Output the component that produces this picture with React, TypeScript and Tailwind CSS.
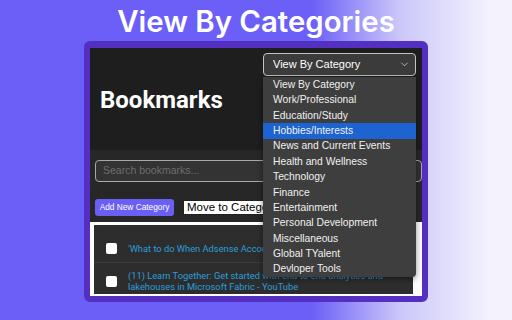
import { ChevronDown } from "lucide-react";

const categories = [
  "View By Category",
  "Work/Professional",
  "Education/Study",
  "Hobbies/Interests",
  "News and Current Events",
  "Health and Wellness",
  "Technology",
  "Finance",
  "Entertainment",
  "Personal Development",
  "Miscellaneous",
  "Global TYalent",
  "Devloper Tools",
];

function Checkbox() {
  return <span className="block h-[11px] w-[11px] shrink-0 rounded-[2px] bg-white" />;
}

export default function App() {
  return (
    <div className="flex h-[320px] w-[512px] flex-col items-center overflow-hidden bg-[linear-gradient(to_right,#6b5ff7_61%,#cbc7fa_78%,#f4f3fd_96%)]">
      <h1 className="flex h-[41px] items-center justify-center pt-[3px] font-['Inter',sans-serif] text-[29.4px] font-semibold leading-none text-white">
        View By Categories
      </h1>

      <div className="flex h-[261px] w-[344px] flex-col overflow-visible rounded-[6px] border-x-[6px] border-t-[7px] border-b-[6px] border-[#5330c1] bg-[#5330c1]">
        {/* header */}
        <div className="relative flex h-[102px] shrink-0 items-center bg-[#1e1e1e] pl-[10px] pt-[1px]">
          <span className="font-['Roboto',sans-serif] text-[24px] font-bold text-white">Bookmarks</span>

          <div className="absolute right-[6px] top-[5px] z-10 w-[153px] font-['Liberation_Sans',Arial,sans-serif]">
            <div className="flex h-[23px] items-center justify-between rounded-[4px] border border-[#c4c4c4] bg-[#3b3b3b] pl-[9px] pr-[5px] text-[11px] text-white">
              <span>View By Category</span>
              <ChevronDown size={11} strokeWidth={1.6} className="text-[#dcdcdc]" />
            </div>
            <ul className="mt-[1px] h-[200px] rounded-b-[4px] bg-[#3e3e3e] text-[10.3px] text-[#f0f0f0] shadow-[0_2px_6px_rgba(0,0,0,0.45)]">
              {categories.map((c) => (
                <li
                  key={c}
                  className={
                    c === "Hobbies/Interests"
                      ? "flex h-[15.38px] items-center bg-[#1d64d0] pl-[10px]"
                      : "flex h-[15.38px] items-center pl-[10px]"
                  }
                >
                  {c}
                </li>
              ))}
            </ul>
          </div>
        </div>

        {/* search + actions */}
        <div className="flex h-[72px] shrink-0 flex-col bg-[#272727] pl-[5px] pt-[10px]">
          <div className="flex h-[22px] w-[327px] items-center rounded-[4px] border border-[#a8a8a8] bg-[#333333] pl-[7px] font-['Liberation_Sans',Arial,sans-serif] text-[10.5px] text-[#6e6e6e]">
            Search bookmarks...
          </div>
          <div className="mt-[17px] flex items-center gap-[9px]">
            <button className="flex h-[17px] w-[79px] items-center justify-center rounded-[3px] bg-[#6a5ff4] font-['Liberation_Sans',Arial,sans-serif] text-[8.3px] text-white">
              Add New Category
            </button>
            <div className="flex h-[15px] w-[110px] items-center border border-[#222] bg-white pl-[3px] font-['Liberation_Sans',Arial,sans-serif] text-[11.5px] text-black">
              Move to Category
            </div>
          </div>
        </div>

        {/* list */}
        <div className="flex min-h-0 flex-1 flex-col overflow-hidden bg-white pb-[2px] pl-[4px] pr-[9px] pt-[3px] font-['Roboto',sans-serif] text-[9.3px] leading-[11px] text-[#2a9edb]">
          <div className="flex h-[37px] shrink-0 items-center gap-[11px] bg-[#2d2d2d] pl-[12px] pt-[9px]">
            <Checkbox />
            <span className="whitespace-nowrap">'What to do When Adsense Account is Disabled</span>
          </div>
          <div className="h-px shrink-0 bg-[#3c3c3c]" />
          <div className="flex min-h-0 flex-1 items-start gap-[11px] overflow-hidden bg-[#2d2d2d] pl-[12px] pt-[7px]">
            <div className="flex h-[22px] items-center">
              <Checkbox />
            </div>
            <span className="w-[270px]">
              (11) Learn Together: Get started with end-to-end analytics and lakehouses in Microsoft Fabric - YouTube
            </span>
          </div>
        </div>
      </div>
    </div>
  );
}
